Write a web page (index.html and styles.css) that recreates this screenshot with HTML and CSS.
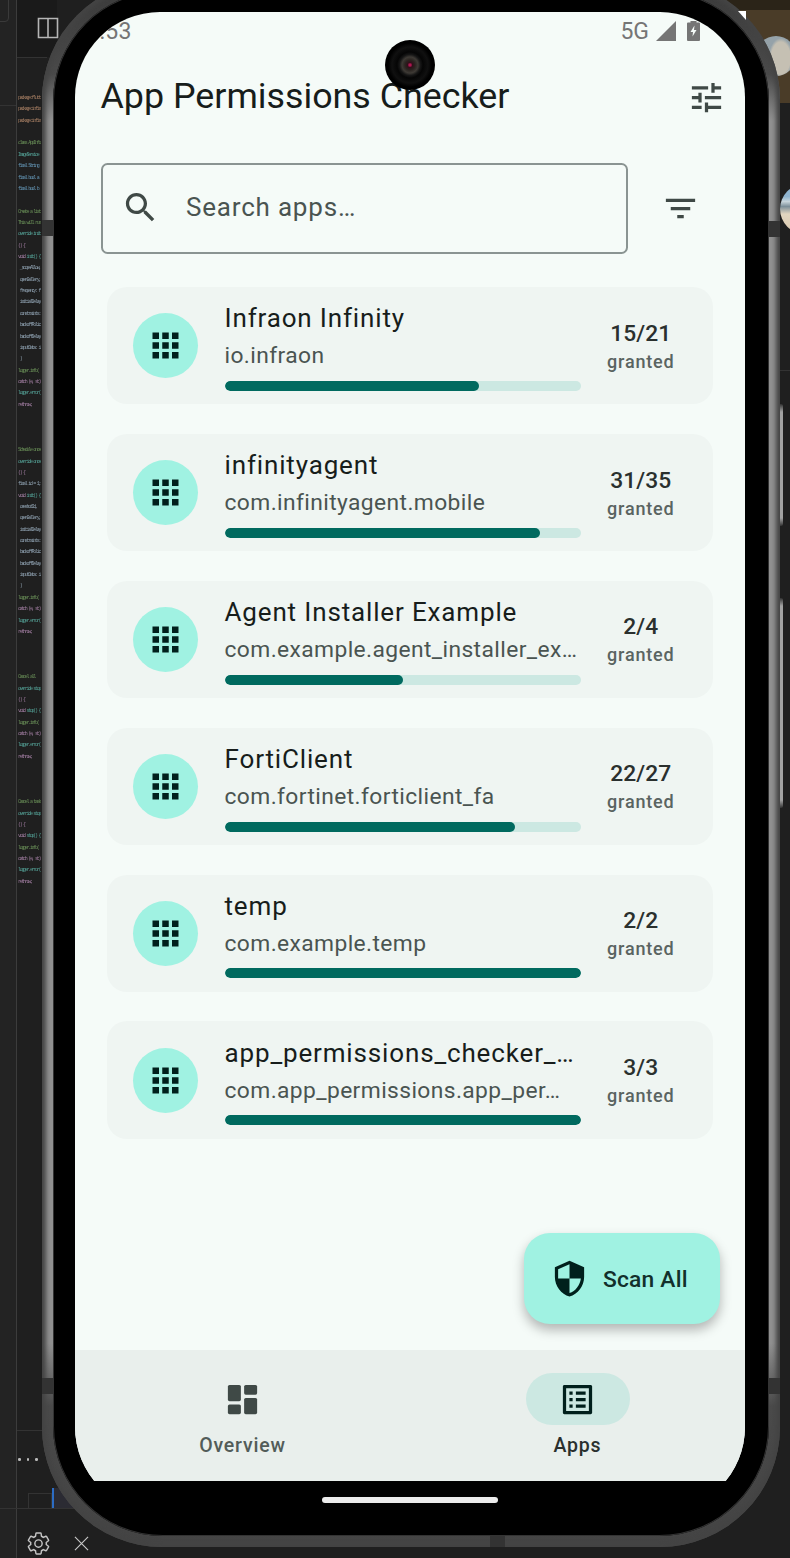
FILE: index.html
```html
<!DOCTYPE html>
<html lang="en">

<head>
    <meta charset="UTF-8">
    <meta name="viewport" content="width=device-width, initial-scale=1.0">
    <title>App Permissions Checker</title>
    <link rel="stylesheet" href="styles.css">
</head>

<body>
    <div id="desktop">
        <div class="sidebar"></div>
        <div class="topshade"></div>
        <div class="topbox"></div>
        <div class="divider"></div>
        <div class="rule rule1"></div>
        <div class="rule rule2"></div>
        <div class="rule rule3"></div>
        <div class="rule rule4"></div>
        <div class="rule rule5"></div>
        <svg class="panelicon" viewBox="0 0 22 22"><path d="M1.5 1.5h19v19h-19zM11 1.5v19" fill="none" stroke="#b5b5b5" stroke-width="1.6"/></svg>
<pre class="code"><span class="o">package:flutt</span>
<span class="o">package:infin</span>
<span class="o">package:infin</span>

<span class="g">class AppInfo</span>
<span class="t">ImageService</span>
<span class="b">final String</span>
<span class="b">final bool a</span>
<span class="b">final bool b</span>

<span class="g">Create a list</span>
<span class="g">This will run</span>
<span class="t">override init</span>
<span class="p">() {</span>
<span class="p">void</span> <span class="t">init() {</span>
<span class="s"> _scopeAllow,</span>
<span class="s"> openGallery,</span>
<span class="s"> frequency: f</span>
<span class="s"> initialDelay</span>
<span class="s"> constraints:</span>
<span class="s"> backoffPolic</span>
<span class="s"> backoffDelay</span>
<span class="s"> inputData: i</span>
<span class="s"> )</span>
<span class="g">logger.info(</span>
<span class="p">catch (e, st)</span>
<span class="t">logger.error(</span>
<span class="p">rethrow;</span>



<span class="g">Schedule once</span>
<span class="t">override once</span>
<span class="p">() {</span>
<span class="s">final id = 1;</span>
<span class="p">void</span> <span class="t">init() {</span>
<span class="s"> oneshotId,</span>
<span class="s"> openGallery,</span>
<span class="s"> initialDelay</span>
<span class="s"> constraints:</span>
<span class="s"> backoffPolic</span>
<span class="s"> backoffDelay</span>
<span class="s"> inputData: i</span>
<span class="s"> )</span>
<span class="g">logger.info(</span>
<span class="p">catch (e, st)</span>
<span class="t">logger.error(</span>
<span class="p">rethrow;</span>



<span class="g">Cancel all</span>
<span class="t">override stop</span>
<span class="p">() {</span>
<span class="p">void</span> <span class="t">stop() {</span>
<span class="g">logger.info(</span>
<span class="p">catch (e, st)</span>
<span class="t">logger.error(</span>
<span class="p">rethrow;</span>



<span class="g">Cancel a task</span>
<span class="t">override stop</span>
<span class="p">() {</span>
<span class="p">void</span> <span class="t">stop() {</span>
<span class="g">logger.info(</span>
<span class="p">catch (e, st)</span>
<span class="t">logger.error(</span>
<span class="p">rethrow;</span></pre>
        <div class="dots"><i></i><i></i><i></i></div>
        <div class="tabbox"></div>
        <div class="tabblue"></div>
        <div class="tabgray"></div>
        <svg class="gear" viewBox="0 0 24 24"><path d="M19.43 12.98c.04-.32.07-.64.07-.98 0-.34-.03-.66-.07-.98l2.11-1.65c.19-.15.24-.42.12-.64l-2-3.46c-.09-.16-.26-.25-.44-.25-.06 0-.12.01-.17.03l-2.49 1c-.52-.4-1.08-.73-1.69-.98l-.38-2.65C14.46 2.18 14.25 2 14 2h-4c-.25 0-.46.18-.49.42l-.38 2.65c-.61.25-1.17.59-1.69.98l-2.49-1c-.06-.02-.12-.03-.18-.03-.17 0-.34.09-.43.25l-2 3.46c-.13.22-.07.49.12.64l2.11 1.65c-.04.32-.07.65-.07.98 0 .33.03.66.07.98l-2.11 1.65c-.19.15-.24.42-.12.64l2 3.46c.09.16.26.25.44.25.06 0 .12-.01.17-.03l2.49-1c.52.4 1.08.73 1.69.98l.38 2.65c.03.24.24.42.49.42h4c.25 0 .46-.18.49-.42l.38-2.65c.61-.25 1.17-.59 1.69-.98l2.49 1c.06.02.12.03.18.03.17 0 .34-.09.43-.25l2-3.46c.12-.22.07-.49-.12-.64l-2.11-1.65zm-7.43 2.52c-1.93 0-3.5-1.57-3.5-3.5s1.57-3.5 3.5-3.5 3.5 1.57 3.5 3.5-1.57 3.5-3.5 3.5z" fill="none" stroke="#c4c4c4" stroke-width="1.4"/></svg>
        <svg class="closex" viewBox="0 0 16 16"><path d="M1 1l14 14M15 1L1 15" fill="none" stroke="#c8c8c8" stroke-width="1.2"/></svg>
        <div class="topright"></div>
        <div class="topstrip"></div>
        <div class="avatar-cat"></div>
        <div class="avatar-beach"></div>
        <div class="sidebtn sidebtn1"></div>
        <div class="sidebtn sidebtn2"></div>
    </div>

    <div id="phone">
        <div class="notch notch-l1"></div>
        <div class="notch notch-l2"></div>
        <div class="notch notch-r1"></div>
        <div class="notch notch-r2"></div>
        <div class="notch notch-b"></div>
        <div id="bezel">
            <div id="screen">
                <div id="app">
                    <div id="status">
                        <span class="time">12:53</span>
                        <div class="flexgrow"></div>
                        <span class="net">5G</span>
                        <svg class="signal" viewBox="0 0 20 20"><path d="M20 0v20H0z" fill="#757575"/></svg>
                        <svg class="battery" viewBox="0 0 13 20"><path d="M3.5 0h6v1.5H12a1 1 0 0 1 1 1V19a1 1 0 0 1-1 1H1a1 1 0 0 1-1-1V2.500a1 1 0 0 1 1-1h2.500z" fill="#757575"/><path d="M7.500 4.500L3.500 11h2.500l-.5 4.500 4-6.500H7z" fill="#f5fbf8"/></svg>
                    </div>

                    <div id="appbar">
                        <p class="title">App Permissions Checker</p>
                        <div class="flexgrow"></div>
                        <svg class="icon" viewBox="0 0 24 24"><path d="M3 17v2h6v-2H3zM3 5v2h10V5H3zm10 16v-2h8v-2h-8v-2h-2v6h2zM7 9v2H3v2h4v2h2V9H7zm14 4v-2H11v2h10zm-6-4h2V7h4V5h-4V3h-2v6z"/></svg>
                    </div>

                    <div id="searchrow">
                        <div id="search">
                            <svg class="icon" viewBox="0 0 24 24"><path d="M15.500 14h-.79l-.28-.27C15.410 12.590 16 11.110 16 9.500 16 5.910 13.090 3 9.500 3S3 5.910 3 9.500 5.910 16 9.500 16c1.610 0 3.090-.59 4.230-1.570l.27.28v.79l5 4.990L20.490 19l-4.990-5zm-6 0C7.010 14 5 11.990 5 9.500S7.010 5 9.500 5 14 7.010 14 9.500 11.990 14 9.500 14z"/></svg>
                            <span>Search apps…</span>
                        </div>
                        <div id="filter">
                            <svg class="icon" viewBox="0 0 24 24"><path d="M10 18h4v-2h-4v2zM3 6v2h18V6H3zm3 7h12v-2H6v2z"/></svg>
                        </div>
                    </div>

                    <div id="list">
                        <div class="card">
                            <div class="appicon"><svg viewBox="0 0 24 24"><path d="M4 8h4V4H4v4zm6 12h4v-4h-4v4zm-6 0h4v-4H4v4zm0-6h4v-4H4v4zm6 0h4v-4h-4v4zm6-10v4h4V4h-4zm-6 4h4V4h-4v4zm6 6h4v-4h-4v4zm0 6h4v-4h-4v4z"/></svg></div>
                            <div class="info">
                                <p class="name">Infraon Infinity</p>
                                <p class="pkg">io.infraon</p>
                                <div class="track"><div class="fill" style="width: 71.4%"></div></div>
                            </div>
                            <div class="count"><p class="num">15/21</p><p class="granted">granted</p></div>
                        </div>
                        <div class="card">
                            <div class="appicon"><svg viewBox="0 0 24 24"><path d="M4 8h4V4H4v4zm6 12h4v-4h-4v4zm-6 0h4v-4H4v4zm0-6h4v-4H4v4zm6 0h4v-4h-4v4zm6-10v4h4V4h-4zm-6 4h4V4h-4v4zm6 6h4v-4h-4v4zm0 6h4v-4h-4v4z"/></svg></div>
                            <div class="info">
                                <p class="name">infinityagent</p>
                                <p class="pkg">com.infinityagent.mobile</p>
                                <div class="track"><div class="fill" style="width: 88.6%"></div></div>
                            </div>
                            <div class="count"><p class="num">31/35</p><p class="granted">granted</p></div>
                        </div>
                        <div class="card">
                            <div class="appicon"><svg viewBox="0 0 24 24"><path d="M4 8h4V4H4v4zm6 12h4v-4h-4v4zm-6 0h4v-4H4v4zm0-6h4v-4H4v4zm6 0h4v-4h-4v4zm6-10v4h4V4h-4zm-6 4h4V4h-4v4zm6 6h4v-4h-4v4zm0 6h4v-4h-4v4z"/></svg></div>
                            <div class="info">
                                <p class="name">Agent Installer Example</p>
                                <p class="pkg">com.example.agent_installer_ex…</p>
                                <div class="track"><div class="fill" style="width: 50%"></div></div>
                            </div>
                            <div class="count"><p class="num">2/4</p><p class="granted">granted</p></div>
                        </div>
                        <div class="card">
                            <div class="appicon"><svg viewBox="0 0 24 24"><path d="M4 8h4V4H4v4zm6 12h4v-4h-4v4zm-6 0h4v-4H4v4zm0-6h4v-4H4v4zm6 0h4v-4h-4v4zm6-10v4h4V4h-4zm-6 4h4V4h-4v4zm6 6h4v-4h-4v4zm0 6h4v-4h-4v4z"/></svg></div>
                            <div class="info">
                                <p class="name">FortiClient</p>
                                <p class="pkg">com.fortinet.forticlient_fa</p>
                                <div class="track"><div class="fill" style="width: 81.5%"></div></div>
                            </div>
                            <div class="count"><p class="num">22/27</p><p class="granted">granted</p></div>
                        </div>
                        <div class="card">
                            <div class="appicon"><svg viewBox="0 0 24 24"><path d="M4 8h4V4H4v4zm6 12h4v-4h-4v4zm-6 0h4v-4H4v4zm0-6h4v-4H4v4zm6 0h4v-4h-4v4zm6-10v4h4V4h-4zm-6 4h4V4h-4v4zm6 6h4v-4h-4v4zm0 6h4v-4h-4v4z"/></svg></div>
                            <div class="info">
                                <p class="name">temp</p>
                                <p class="pkg">com.example.temp</p>
                                <div class="track"><div class="fill" style="width: 100%"></div></div>
                            </div>
                            <div class="count"><p class="num">2/2</p><p class="granted">granted</p></div>
                        </div>
                        <div class="card">
                            <div class="appicon"><svg viewBox="0 0 24 24"><path d="M4 8h4V4H4v4zm6 12h4v-4h-4v4zm-6 0h4v-4H4v4zm0-6h4v-4H4v4zm6 0h4v-4h-4v4zm6-10v4h4V4h-4zm-6 4h4V4h-4v4zm6 6h4v-4h-4v4zm0 6h4v-4h-4v4z"/></svg></div>
                            <div class="info">
                                <p class="name">app_permissions_checker_…</p>
                                <p class="pkg">com.app_permissions.app_per…</p>
                                <div class="track"><div class="fill" style="width: 100%"></div></div>
                            </div>
                            <div class="count"><p class="num">3/3</p><p class="granted">granted</p></div>
                        </div>
                    </div>

                    <div id="fab">
                        <svg class="icon" viewBox="0 0 24 24"><path d="M12 1L3 5v6c0 5.550 3.840 10.740 9 12 5.160-1.260 9-6.450 9-12V5l-9-4zm0 10.990h7c-.53 4.120-3.280 7.790-7 8.940V12H5V6.300l7-3.110v8.800z"/></svg>
                        <span>Scan All</span>
                    </div>

                    <div id="nav">
                        <div class="navitem">
                            <div class="pill">
                                <svg class="icon" viewBox="0 0 24 24"><rect x="3" y="3" width="8" height="10" rx="1"/><rect x="13" y="3" width="8" height="6" rx="1"/><rect x="3" y="15" width="8" height="6" rx="1"/><rect x="13" y="11" width="8" height="10" rx="1"/></svg>
                            </div>
                            <p>Overview</p>
                        </div>
                        <div class="navitem active">
                            <div class="pill">
                                <svg class="icon" viewBox="0 0 24 24"><path d="M19 5v14H5V5h14m1.100-2H3.900c-.5 0-.9.4-.9.9v16.200c0 .4.4.9.9.9h16.200c.4 0 .9-.5.9-.9V3.900c0-.5-.5-.9-.9-.9zM11 7h6v2h-6V7zm0 4h6v2h-6v-2zm0 4h6v2h-6zM7 7h2v2H7zm0 4h2v2H7zm0 4h2v2H7z"/></svg>
                            </div>
                            <p>Apps</p>
                        </div>
                    </div>
                </div>
                <div id="homebar"><div class="homeline"></div></div>
            </div>
        </div>
        <div id="camera"></div>
        <div id="shard"></div>
    </div>
</body>

</html>
```

FILE: styles.css
```css
html,
body {
    margin: 0;
    height: 1558px;
    overflow: hidden;
    background: #1f1f1f;
    font-family: 'Roboto', sans-serif;
}

p {
    margin: 0;
}

.flexgrow {
    flex-grow: 9999;
}

/* desktop behind the phone */
#desktop {
    position: absolute;
    left: 0;
    top: 0;
    width: 790px;
    height: 1558px;
    overflow: hidden;
}

#desktop div,
#desktop svg,
.code {
    position: absolute;
}

.sidebar {
    left: 0;
    top: 0;
    width: 16px;
    height: 1558px;
    background: #232323;
}

.topshade {
    left: 17px;
    top: 0;
    width: 40px;
    height: 57px;
    background: #1a1a1a;
}

.topbox {
    left: -6px;
    top: -4px;
    width: 13px;
    height: 24px;
    border: 1px solid #3a3a3a;
    border-radius: 4px;
}

.divider {
    left: 16px;
    top: 0;
    width: 1px;
    height: 1558px;
    background: #3c3c3c;
}

.rule {
    background: #333;
    height: 1px;
}

.rule1 {
    left: 17px;
    top: 57px;
    width: 30px;
}

.rule2 {
    left: 0;
    top: 105px;
    width: 16px;
}

.rule3 {
    left: 17px;
    top: 1430px;
    width: 25px;
}

.rule4 {
    left: 0;
    top: 1508px;
    width: 130px;
}

.rule5 {
    left: 780px;
    top: 370px;
    width: 10px;
}

.panelicon {
    left: 37px;
    top: 17px;
    width: 22px;
    height: 22px;
}

.code {
    left: 18px;
    top: 93px;
    width: 23px;
    height: 800px;
    margin: 0;
    overflow: hidden;
    font-family: 'Liberation Mono', monospace;
    font-size: 5px;
    letter-spacing: -1.3px;
    line-height: 11.36px;
    color: #999;
    opacity: .75;
    filter: blur(.3px);
}

.code .o { color: #d09c78; }
.code .g { color: #7fb068; }
.code .t { color: #62c4b6; }
.code .b { color: #78b8e0; }
.code .p { color: #c99ac9; }
.code .s { color: #b0c8dc; }

.dots {
    left: 18px;
    top: 1458px;
    display: flex;
    gap: 6px;
}

.dots i {
    width: 2.500px;
    height: 2.500px;
    border-radius: 50%;
    background: #bbb;
}

.tabbox {
    left: 28px;
    top: 1493px;
    width: 24px;
    height: 16px;
    border: 1px solid #333;
    box-sizing: border-box;
}

.tabblue {
    left: 52px;
    top: 1488px;
    width: 2px;
    height: 20px;
    background: #2c6cc4;
}

.tabgray {
    left: 54px;
    top: 1488px;
    width: 24px;
    height: 20px;
    background: #2b2b33;
}

.gear {
    left: 26px;
    top: 1531px;
    width: 25px;
    height: 25px;
}

.closex {
    left: 74px;
    top: 1536px;
    width: 15px;
    height: 15px;
}

.topright {
    left: 700px;
    top: 10px;
    width: 90px;
    height: 93px;
    background: #4a3c28;
}

.topstrip {
    left: 700px;
    top: 0;
    width: 90px;
    height: 10px;
    background: #2b2418;
}

.avatar-cat {
    left: 756px;
    top: 36px;
    width: 40px;
    height: 40px;
    border-radius: 50%;
    background: radial-gradient(ellipse 30% 50% at 62% 55%, #c5c0b3 0 80%, transparent 100%), #95a2a9;
}

.avatar-beach {
    left: 780px;
    top: 184px;
    width: 50px;
    height: 50px;
    border-radius: 50%;
    background: linear-gradient(#8eb3cf 0 25%, #c7d4da 35%, #7c8f99 45%, #e2d6c0 60%, #d9c8ae 100%);
}

.sidebtn {
    left: 779px;
    width: 4px;
    border-radius: 0 2px 2px 0;
    background: linear-gradient(#333 0, #a2a2a2 8px, #a2a2a2 calc(100% - 8px), #333 100%);
}

.sidebtn1 {
    top: 404px;
    height: 122px;
}

.sidebtn2 {
    top: 598px;
    height: 210px;
}

/* phone frame */
#phone {
    position: absolute;
    left: 42px;
    top: -20px;
    width: 738px;
    height: 1567px;
    padding: 11px;
    box-sizing: border-box;
    border-radius: 120px;
    background: linear-gradient(#3a3a3a 0, #4a4a4a 6%, #909090 9%, #909090 87%, #4a4a4a 91%, #444 100%);
    box-shadow: inset 0 0 4px 4px #444;
}

.notch {
    position: absolute;
    background: #333;
}

.notch-l1,
.notch-l2,
.notch-r1,
.notch-r2 {
    width: 11px;
    height: 16px;
}

.notch-l1 { left: 0; top: 240px; }
.notch-l2 { left: 0; top: 1398px; }
.notch-r1 { right: 0; top: 241px; }
.notch-r2 { right: 0; top: 1398px; }

.notch-b {
    left: 448px;
    bottom: 0;
    width: 15px;
    height: 11px;
}

#bezel {
    height: 100%;
    box-sizing: border-box;
    padding: 21px 24px 24px 22px;
    border-radius: 110px;
    background: #000;
    box-shadow: inset 0 0 0 1px #333;
}

#screen {
    height: 100%;
    border-radius: 85px;
    overflow: hidden;
    display: flex;
    flex-direction: column;
}

#camera {
    position: absolute;
    left: 343px;
    top: 60px;
    width: 50px;
    height: 50px;
    border-radius: 50%;
    background: radial-gradient(circle at 50% 50%, #b01550 0 1px, #30101a 2.5px, #2a2420 5px, #3e3a35 8px, #161616 10.5px, #050505 13px, #101010 18px, #000 22px);
}

#shard {
    position: absolute;
    left: 696px;
    top: 31px;
    width: 8px;
    height: 9px;
    background: #fff;
    clip-path: polygon(0 0, 100% 0, 100% 100%);
}

/* app */
#app {
    position: relative;
    height: 1469px;
    display: flex;
    flex-direction: column;
    background: #f5fbf8;
    color: #171d1b;
}

.icon {
    width: 39px;
    height: 39px;
    fill: #3f4946;
    flex-shrink: 0;
}

#status {
    display: flex;
    align-items: center;
    height: 38px;
    padding: 0 45px 2px 0;
    color: #757575;
    font-size: 23px;
}

.time {
    margin-left: -2px;
    letter-spacing: 0.3px;
}

.net {
    font-size: 23px;
}

.signal {
    width: 20px;
    height: 20px;
    margin-left: 7px;
}

.battery {
    width: 13px;
    height: 20px;
    margin-left: 11px;
}

#appbar {
    display: flex;
    align-items: center;
    height: 90px;
    padding: 0 19px 0 26px;
}

.title {
    font-size: 35.800px;
    margin: -2px 0 0 -0.5px;
    white-space: nowrap;
}

#searchrow {
    display: flex;
    align-items: center;
    margin-top: 21px;
    padding-left: 26px;
}

#search {
    display: flex;
    align-items: center;
    width: 527px;
    height: 91px;
    box-sizing: border-box;
    padding: 0 0 3px 18px;
    border: 2px solid #8a9492;
    border-radius: 6.500px;
    font-size: 26px;
    letter-spacing: 0.8px;
    color: #4a5451;
}

#search span {
    margin-left: 26px;
}

#filter {
    margin-left: 33px;
    height: 39px;
}

#list {
    display: flex;
    flex-direction: column;
    gap: 29.600px;
    margin-top: 33px;
    padding: 0 32px;
}

.card {
    display: flex;
    align-items: center;
    height: 117.300px;
    padding: 0 12px 0 26px;
    border-radius: 20px;
    background: #eff5f2;
}

.appicon {
    width: 65px;
    height: 65px;
    flex-shrink: 0;
    display: flex;
    align-items: center;
    justify-content: center;
    border-radius: 50%;
    background: #a0f2e2;
}

.appicon svg {
    width: 39px;
    height: 39px;
    fill: #00201c;
}

.info {
    width: 356px;
    margin-left: 26.500px;
    flex-shrink: 0;
}

.name,
.pkg {
    white-space: nowrap;
}

.name {
    font-size: 26px;
    line-height: 36px;
    letter-spacing: 0.85px;
}

.pkg {
    margin-top: 2px;
    font-size: 22.800px;
    line-height: 36px;
    letter-spacing: 0.4px;
    color: #4a5451;
}

.track {
    height: 10px;
    margin-top: 6.500px;
    border-radius: 5px;
    background: #cce8e2;
    overflow: hidden;
}

.fill {
    height: 100%;
    border-radius: 5px;
    background: #006a5f;
}

.count {
    flex-grow: 1;
    text-align: center;
    margin-top: 2px;
}

.num {
    font-size: 22.800px;
    font-weight: 500;
    line-height: 30px;
    letter-spacing: 0.1px;
    color: #2a302e;
}

.granted {
    font-size: 18px;
    font-weight: 500;
    line-height: 26px;
    letter-spacing: 0.8px;
    color: #5a6461;
}

#fab {
    position: absolute;
    left: 449px;
    top: 1221px;
    width: 196px;
    height: 91px;
    box-sizing: border-box;
    display: flex;
    align-items: center;
    padding-left: 26px;
    border-radius: 26px;
    background: #a0f2e2;
    box-shadow: 0 6px 12px rgba(0, 0, 0, .28);
    color: #12302b;
    font-size: 22.800px;
    font-weight: 500;
    letter-spacing: 0.2px;
}

#fab .icon {
    fill: #00201c;
}

#fab span {
    margin: 2px 0 0 14px;
}

#nav {
    display: flex;
    height: 131px;
    margin-top: auto;
    background: #e9efec;
}

.navitem {
    flex: 1;
    display: flex;
    flex-direction: column;
    align-items: center;
    padding-top: 23px;
    color: #525c59;
    font-size: 19.500px;
    font-weight: 500;
    letter-spacing: 0.8px;
}

.navitem p {
    margin-top: 9px;
}

.pill {
    width: 104px;
    height: 52px;
    display: flex;
    align-items: center;
    justify-content: center;
    border-radius: 26px;
}

.active {
    color: #2a302e;
}

.active .pill {
    background: #cce8e2;
}

.active .icon {
    fill: #00201c;
}

#homebar {
    flex-grow: 1;
    background: #000;
    padding-top: 16px;
}

.homeline {
    width: 176px;
    height: 6px;
    margin: 0 auto;
    border-radius: 3px;
    background: #ececec;
}
```
